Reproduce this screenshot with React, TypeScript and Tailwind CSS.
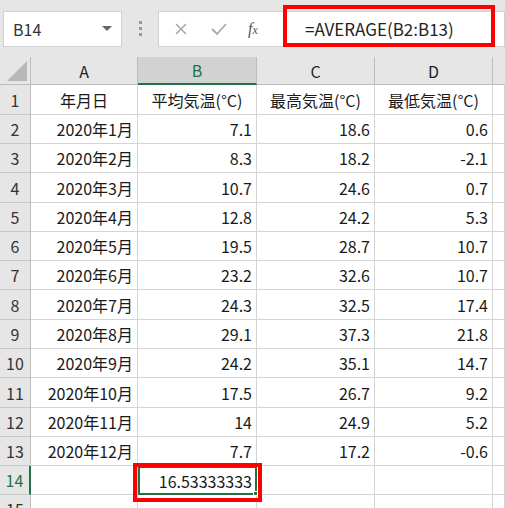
import React from 'react';

const rows: [string, string, string, string][] = [
  ['2020年1月', '7.1', '18.6', '0.6'],
  ['2020年2月', '8.3', '18.2', '-2.1'],
  ['2020年3月', '10.7', '24.6', '0.7'],
  ['2020年4月', '12.8', '24.2', '5.3'],
  ['2020年5月', '19.5', '28.7', '10.7'],
  ['2020年6月', '23.2', '32.6', '10.7'],
  ['2020年7月', '24.3', '32.5', '17.4'],
  ['2020年8月', '29.1', '37.3', '21.8'],
  ['2020年9月', '24.2', '35.1', '14.7'],
  ['2020年10月', '17.5', '26.7', '9.2'],
  ['2020年11月', '14', '24.9', '5.2'],
  ['2020年12月', '7.7', '17.2', '-0.6'],
];

const font = { fontFamily: '"Noto Sans CJK JP", "Noto Sans", sans-serif' };

function RowHead({ n, active }: { n: number; active?: boolean }) {
  return (
    <div
      className={`flex items-center justify-center bg-[#e6e6e6] border-b border-[#c8c8c8] text-[16px] ${
        active ? 'text-[#217346] border-r-2 border-r-[#217346]' : 'text-[#333] border-r border-r-[#bdbdbd]'
      }`}
    >
      {n}
    </div>
  );
}

function Cell({ children, align = 'right' }: { children?: React.ReactNode; align?: 'right' | 'center' }) {
  return (
    <div
      className={`flex items-center border-r border-b border-[#d4d4d4] bg-white text-[16px] text-[#1a1a1a] px-[4px] whitespace-nowrap ${
        align === 'right' ? 'justify-end' : 'justify-center'
      }`}
    >
      {children}
    </div>
  );
}

export default function App() {
  return (
    <div className="w-[505px] h-[508px] overflow-hidden bg-white relative" style={font}>
      {/* Formula bar */}
      <div className="h-[57px] bg-[#e6e6e6] flex items-center pl-[3px]">
        <div className="w-[119px] h-[36px] bg-white border border-[#d0d0d0] flex items-center justify-between pl-[9px] pr-[9px]">
          <span className="text-[16px] text-[#333]">B14</span>
          <span className="w-0 h-0 border-l-[5px] border-r-[5px] border-t-[5px] border-l-transparent border-r-transparent border-t-[#666]" />
        </div>
        <div className="w-[36px] flex flex-col items-center gap-[3px]">
          <span className="w-[3px] h-[3px] bg-[#9a9a9a]" />
          <span className="w-[3px] h-[3px] bg-[#9a9a9a]" />
          <span className="w-[3px] h-[3px] bg-[#9a9a9a]" />
        </div>
        <div className="flex-1 h-[36px] bg-white border border-[#d0d0d0] flex items-center">
          <div className="w-[125px] flex items-center h-full">
            <svg width="14" height="14" viewBox="0 0 14 14" className="ml-[15px]">
              <path d="M2 2 L12 12 M12 2 L2 12" stroke="#a8a8a8" strokeWidth="1.6" />
            </svg>
            <svg width="18" height="14" viewBox="0 0 18 14" className="ml-[22px]">
              <path d="M2 7 L7 12 L16 2" stroke="#a8a8a8" strokeWidth="1.8" fill="none" />
            </svg>
            <span className="ml-[20px] text-[16px] italic text-[#555]" style={{ fontFamily: '"Liberation Serif", serif' }}>
              f<span className="text-[12px]">x</span>
            </span>
          </div>
          <div className="h-full border-l border-[#d0d0d0] flex items-center pl-[20px] text-[17px] text-[#222]">
            =AVERAGE(B2:B13)
          </div>
        </div>
      </div>

      {/* Sheet */}
      <div className="grid grid-cols-[31px_107px_119px_118px_118px_1fr] grid-rows-[28px_30px_29px_29px_30px_29px_29px_29px_30px_29px_29px_30px_29px_29px_29px_29px]">
        {/* header row */}
        <div className="bg-[#e6e6e6] border-r border-b border-[#bdbdbd] flex items-end justify-end p-[3px]">
          <svg width="20" height="20" viewBox="0 0 20 20">
            <path d="M20 0 L20 20 L0 20 Z" fill="#b8b8b8" />
          </svg>
        </div>
        <div className="bg-[#e6e6e6] border-r border-b border-[#bdbdbd] flex items-center justify-center text-[16px] text-[#222]">A</div>
        <div className="bg-[#d2d2d2] border-r border-[#bdbdbd] border-b-2 border-b-[#217346] flex items-center justify-center text-[16px] text-[#217346]">B</div>
        <div className="bg-[#e6e6e6] border-r border-b border-[#bdbdbd] flex items-center justify-center text-[16px] text-[#222]">C</div>
        <div className="bg-[#e6e6e6] border-r border-b border-[#bdbdbd] flex items-center justify-center text-[16px] text-[#222]">D</div>
        <div className="bg-[#e6e6e6] border-b border-[#bdbdbd]" />

        {/* row 1 */}
        <RowHead n={1} />
        <Cell align="center">年月日</Cell>
        <Cell align="center">平均気温(°C)</Cell>
        <Cell align="center">最高気温(°C)</Cell>
        <Cell align="center">最低気温(°C)</Cell>
        <Cell />

        {rows.map((r, i) => (
          <React.Fragment key={i}>
            <RowHead n={i + 2} />
            <Cell>{r[0]}</Cell>
            <Cell>{r[1]}</Cell>
            <Cell>{r[2]}</Cell>
            <Cell>{r[3]}</Cell>
            <Cell />
          </React.Fragment>
        ))}

        <RowHead n={14} active />
        <Cell />
        <div className="relative flex items-center justify-end border-2 border-[#217346] bg-white text-[16px] text-[#1a1a1a] px-[3px]">
          16.53333333
          <span className="absolute -right-[3px] -bottom-[3px] w-[5px] h-[5px] bg-[#217346] border border-white" />
        </div>
        <Cell />
        <Cell />
        <Cell />

        <RowHead n={15} />
        <Cell />
        <Cell />
        <Cell />
        <Cell />
        <Cell />
      </div>

      {/* annotations */}
      <div className="absolute left-[283px] top-[5px] w-[212px] h-[42px] border-4 border-[#ff0000]" />
      <div className="absolute left-[133px] top-[463px] w-[129px] h-[39px] border-4 border-[#ff0000]" />
    </div>
  );
}
